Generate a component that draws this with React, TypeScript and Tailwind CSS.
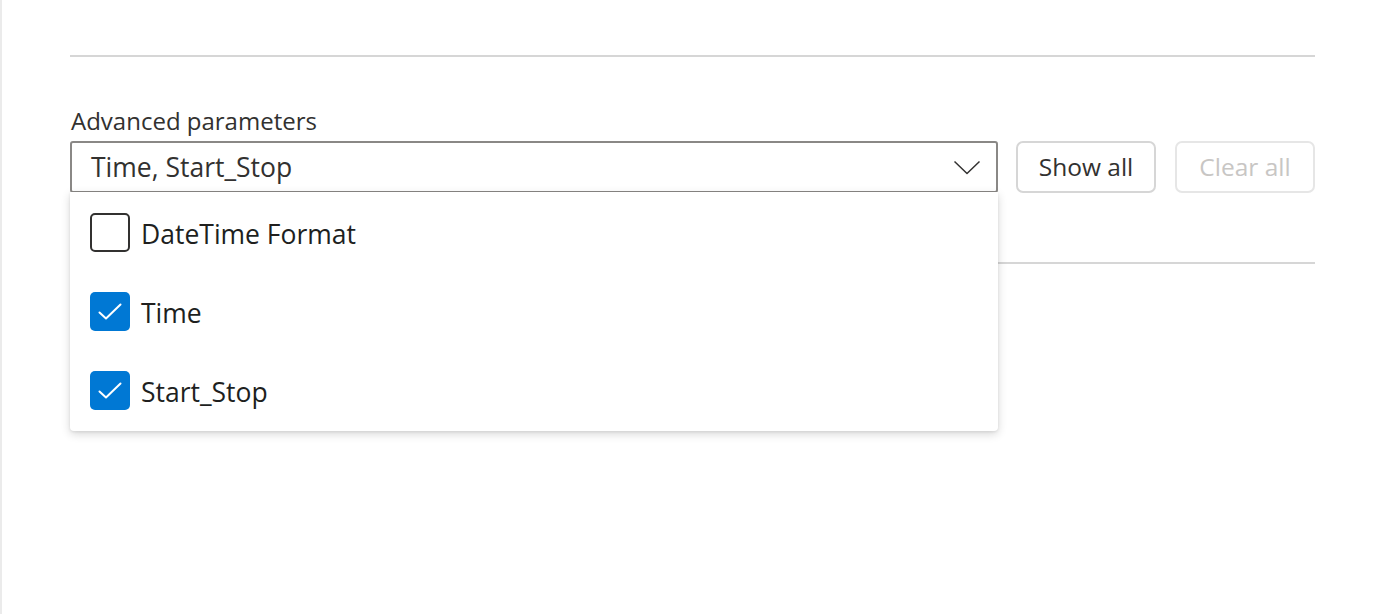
import { useState } from 'react'

const OPTIONS = ['DateTime Format', 'Time', 'Start_Stop']

function Chevron() {
  return (
    <svg width="28" height="15" viewBox="0 0 28 15" fill="none">
      <path d="M1.5 1.5 L14 13.5 L26.5 1.5" stroke="#323130" strokeWidth="1.5" strokeLinejoin="round" />
    </svg>
  )
}

function Checkbox({ checked }: { checked: boolean }) {
  if (!checked) {
    return <span className="w-[40px] h-[39px] rounded-[5px] border-2 border-[#323130] bg-white shrink-0" />
  }
  return (
    <span className="w-[40px] h-[39px] rounded-[5px] bg-[#0078d4] shrink-0 flex items-center justify-center">
      <svg width="24" height="18" viewBox="0 0 24 18" fill="none">
        <path d="M1.5 9.5 L8 15.5 L22.5 1.5" stroke="white" strokeWidth="2" strokeLinecap="round" strokeLinejoin="round" />
      </svg>
    </span>
  )
}

export default function App() {
  const [selected, setSelected] = useState<string[]>(['Time', 'Start_Stop'])

  function toggle(opt: string) {
    setSelected(prev => prev.includes(opt) ? prev.filter(o => o !== opt) : [...prev, opt])
  }

  const value = OPTIONS.filter(o => selected.includes(o)).join(', ')

  return (
    <div
      className="min-h-screen h-[614px] bg-white border-l-2 border-[#ebebeb] pl-[68px] pr-[62px] text-[#323130]"
      style={{ fontFamily: '"Open Sans", "Noto Sans", sans-serif' }}
    >
      <div className="pt-[55px]">
        <div className="h-[2px] bg-[#d6d6d6]" />
      </div>

      <div className="mt-[50px] text-[24px] leading-[28px] text-[#323130] pl-[1px]">Advanced parameters</div>

      <div className="relative mt-[6px]">
        <div className="flex items-start">
          <button className="w-[928px] h-[52px] border-2 border-[#8a8886] rounded-[3px] flex items-center pl-[19px] pr-[15px] text-left">
            <span className="flex-1 text-[26.5px] leading-[32px] text-[#323130]">{value}</span>
            <Chevron />
          </button>
          <button className="ml-[18px] w-[140px] h-[52px] border-2 border-[#d6d6d6] rounded-[7px] text-[24.5px] text-[#323130]">
            Show all
          </button>
          <button className="ml-[19px] w-[140px] h-[52px] border-2 border-[#e6e6e6] rounded-[7px] text-[24.5px] text-[#c8c6c4]">
            Clear all
          </button>
        </div>

        <div className="mt-[69px] h-[2px] bg-[#d6d6d6]" />

        <div className="absolute left-0 top-[51px] w-[928px] bg-white rounded-b-[4px] py-[1px] shadow-[0_3px_10px_rgba(0,0,0,0.16),0_1px_3px_rgba(0,0,0,0.08)]">
          {OPTIONS.map(opt => (
            <div
              key={opt}
              onClick={() => toggle(opt)}
              className="h-[79px] flex items-center pl-[20px] gap-[11px] cursor-pointer"
            >
              <Checkbox checked={selected.includes(opt)} />
              <span className="text-[26.5px] leading-[32px] pt-[3px] text-[#201f1e]">{opt}</span>
            </div>
          ))}
        </div>
      </div>
    </div>
  )
}
